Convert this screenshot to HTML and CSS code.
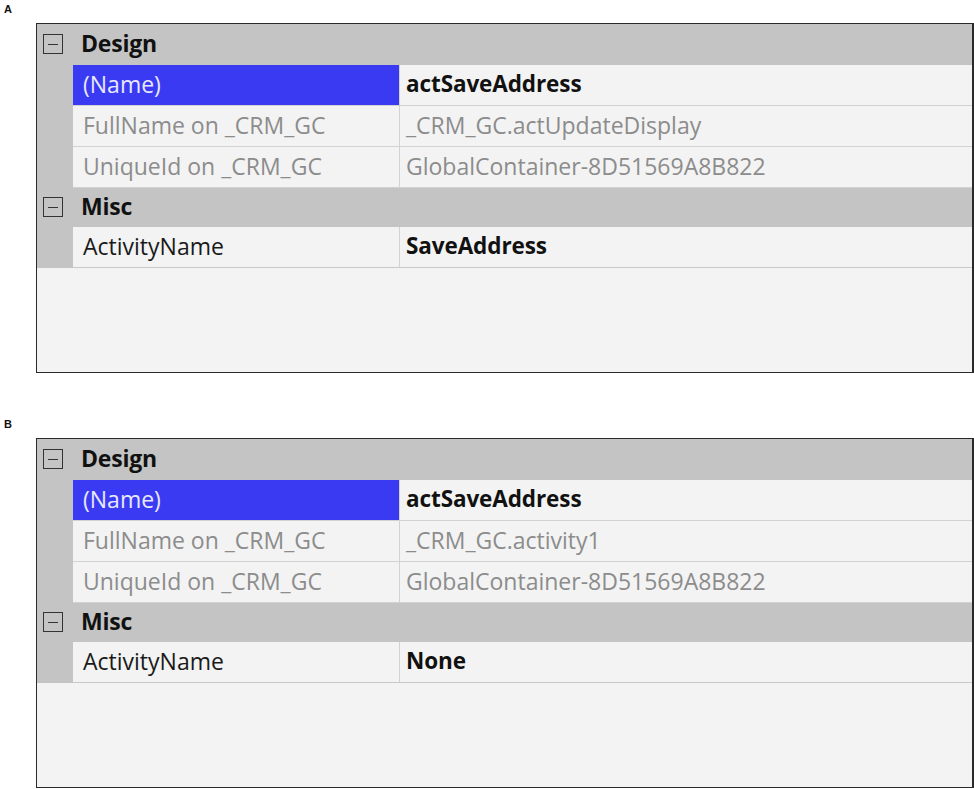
FILE: index.html
```html
<!DOCTYPE html>
<html>
<head>
<meta charset="utf-8">
<link rel="stylesheet" href="styles.css">
</head>
<body>
<div class="fig">
  <div class="label">A</div>
  <div class="grid">
    <div class="cat"><span class="toggle"></span><span class="cat-title">Design</span></div>
    <div class="row"><div class="gut"></div><div class="name sel">(Name)</div><div class="val bold">actSaveAddress</div></div>
    <div class="row"><div class="gut"></div><div class="name dim">FullName on _CRM_GC</div><div class="val dim">_CRM_GC.actUpdateDisplay</div></div>
    <div class="row"><div class="gut"></div><div class="name dim">UniqueId on _CRM_GC</div><div class="val dim">GlobalContainer-8D51569A8B822</div></div>
    <div class="cat cat-short"><span class="toggle"></span><span class="cat-title">Misc</span></div>
    <div class="row"><div class="gut"></div><div class="name">ActivityName</div><div class="val bold">SaveAddress</div></div>
  </div>
</div>
<div class="fig">
  <div class="label">B</div>
  <div class="grid">
    <div class="cat"><span class="toggle"></span><span class="cat-title">Design</span></div>
    <div class="row"><div class="gut"></div><div class="name sel">(Name)</div><div class="val bold">actSaveAddress</div></div>
    <div class="row"><div class="gut"></div><div class="name dim">FullName on _CRM_GC</div><div class="val dim">_CRM_GC.activity1</div></div>
    <div class="row"><div class="gut"></div><div class="name dim">UniqueId on _CRM_GC</div><div class="val dim">GlobalContainer-8D51569A8B822</div></div>
    <div class="cat cat-short"><span class="toggle"></span><span class="cat-title">Misc</span></div>
    <div class="row"><div class="gut"></div><div class="name">ActivityName</div><div class="val bold">None</div></div>
  </div>
</div>
</body>
</html>
```
FILE: styles.css
```css
html, body {
  margin: 0;
  padding: 0;
  background: #ffffff;
}
body {
  font-family: "Open Sans", "Noto Sans", sans-serif;
  color: #111;
  width: 974px;
  height: 789px;
  overflow: hidden;
}
.fig {
  padding-top: 3px;
  padding-bottom: 42px;
}
.fig:last-child {
  padding-bottom: 0;
}
.label {
  font-family: "Liberation Sans", Arial, sans-serif;
  font-weight: bold;
  font-size: 11px;
  line-height: 13px;
  height: 13px;
  padding-left: 4px;
  margin-bottom: 7px;
}
.grid {
  margin-left: 36px;
  width: 935px;
  height: 348px;
  border: 1px solid #2a2a2a;
  border-right: 2px solid #2a2a2a;
  background: #f3f3f3;
  box-sizing: content-box;
  display: flex;
  flex-direction: column;
}
.cat {
  height: 41px;
  background: #c4c4c4;
  display: flex;
  align-items: center;
  flex: none;
}
.cat-short {
  height: 39px;
}
.toggle {
  width: 18px;
  height: 18px;
  border: 1px solid #333;
  margin-left: 6px;
  margin-top: -2px;
  position: relative;
  box-sizing: content-box;
  flex: none;
}
.toggle::after {
  content: "";
  position: absolute;
  left: 4px;
  right: 4px;
  top: 9px;
  height: 1px;
  background: #333;
}
.cat-title {
  margin-left: 18px;
  margin-top: -3px;
  font-weight: bold;
  font-size: 23px;
  letter-spacing: -0.2px;
  color: #111;
}
.row {
  height: 41px;
  display: flex;
  flex: none;
  border-bottom: 1px solid #d2d2d2;
  box-sizing: border-box;
}
.row:last-child {
  border-bottom: 1px solid #c9c9c9;
}
.gut {
  width: 36px;
  background: #c4c4c4;
  flex: none;
  margin-bottom: -1px;
}
.name {
  width: 316px;
  padding-left: 10px;
  flex: none;
  font-size: 23px;
  line-height: 38px;
  color: #1a1a1a;
  border-right: 1px solid #d2d2d2;
  white-space: nowrap;
}
.name.sel {
  background: #3a3af2;
  color: #e8e8ff;
}
.val {
  padding-left: 6px;
  font-size: 23px;
  line-height: 38px;
  color: #111;
  white-space: nowrap;
}
.val.bold {
  font-size: 22.5px;
  letter-spacing: -0.1px;
}
.bold {
  font-weight: bold;
}
.dim {
  color: #8c8c8c;
}
```
